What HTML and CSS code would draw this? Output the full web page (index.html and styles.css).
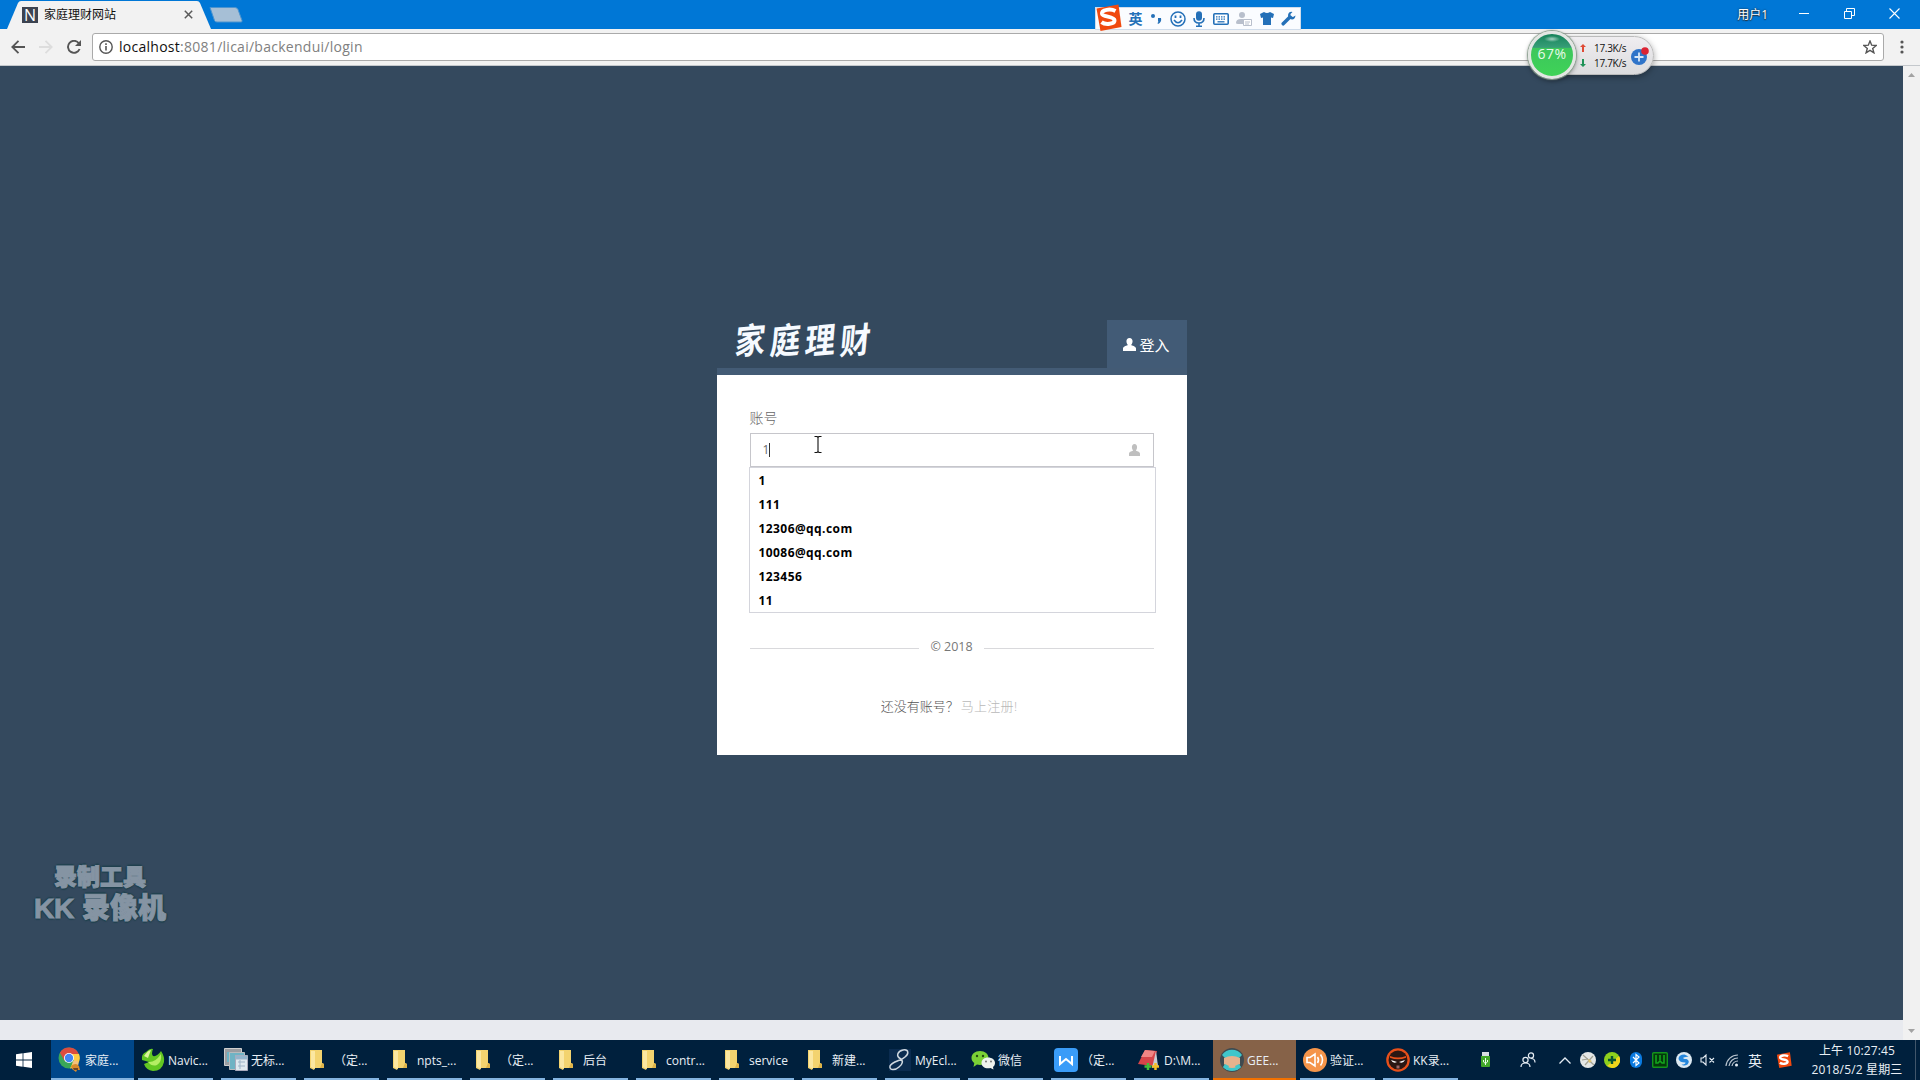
FILE: index.html
```html
<!DOCTYPE html>
<html lang="zh-CN">
<head>
<meta charset="utf-8">
<title>家庭理财网站</title>
<link rel="stylesheet" href="styles.css">
</head>
<body>
<svg width="0" height="0" class="defs">
  <symbol id="folder" viewBox="0 0 14 20"><path d="M0 0h12v13l2 1v4H5l-1 2-4-2z" fill="#f3d36f"/><path d="M1 1h4v18l-4-2z" fill="#fbe7a1"/><path d="M12 13l2 1v4h-4z" fill="#dfb449"/></symbol>
  <symbol id="user" viewBox="0 0 14 14"><path d="M7 0c2.200 0 3.300 1.600 3.300 3.600 0 1.700-.6 3-1.600 3.900 1 .9 4.800 1.100 5.300 3.500V14H0v-3c.5-2.400 4.300-2.600 5.300-3.500-1-.9-1.600-2.200-1.600-3.900C3.700 1.600 4.800 0 7 0z"/></symbol>
  <symbol id="sogou" viewBox="0 0 26 27"><path d="M1 4.500L23 .5 26 23 5 27z" fill="#f0490f"/><path d="M20 7C15 4.500 6 5.500 6.500 9.800c.5 3.500 12 2.200 12.500 6.400.4 4-9 5-13 2" fill="none" stroke="#fff" stroke-width="4"/></symbol>
</svg>

<header class="titlebar">
  <div class="tab">
    <svg class="tab-shape" width="204" height="29" viewBox="0 0 204 29"><path d="M0 29L11 3q1-2 3-2H190q2 0 3 2l11 26z" fill="#f2f2f2"/></svg>
    <span class="favicon">N</span>
    <span class="tab-title">家庭理财网站</span>
    <svg class="tab-close" width="9" height="9" viewBox="0 0 9 9"><path d="M.8.8l7.400 7.400M8.200.8L.8 8.200" stroke="#5a5a5a" stroke-width="1.500"/></svg>
  </div>
  <svg class="new-tab" width="34" height="16" viewBox="0 0 34 16"><path d="M1 .5h25q2 0 3 2l4 11q.5 1.500-1 1.500H8q-2 0-2.500-1.500z" fill="#a6bfd6" stroke="#4d94cf"/></svg>
  <div class="window-controls">
    <span class="profile">用户1</span>
    <svg width="10" height="11" viewBox="0 0 10 11"><path d="M0 5.500h10" stroke="#fff"/></svg>
    <svg width="11" height="11" viewBox="0 0 11 11" fill="none" stroke="#fff"><path d="M.5 3.500h7v7h-7zM2.500 3V.5h8v7H8"/></svg>
    <svg width="11" height="11" viewBox="0 0 11 11"><path d="M.5.5l10 10M10.500.5l-10 10" stroke="#fff" stroke-width="1.100"/></svg>
  </div>
</header>

<nav class="toolbar">
  <svg width="14" height="14" viewBox="0 0 14 14" fill="none" stroke="#555" stroke-width="1.800"><path d="M7.500.8L1.300 7l6.200 6.200M1.500 7H14"/></svg>
  <svg width="14" height="14" viewBox="0 0 14 14" fill="none" stroke="#ddd" stroke-width="1.800"><path d="M6.500.8L12.700 7l-6.200 6.200M12.500 7H0"/></svg>
  <svg width="14" height="14" viewBox="0 0 14 14"><path d="M11.800 3.200A6 6 0 1 0 12.600 9" fill="none" stroke="#555" stroke-width="1.900"/><path d="M14 0v6H8z" fill="#555"/></svg>
  <div class="omnibox">
    <svg width="14" height="14" viewBox="0 0 14 14"><circle cx="7" cy="7" r="6.200" fill="none" stroke="#555" stroke-width="1.400"/><path d="M7 6v4.500M7 3.200v1.700" stroke="#555" stroke-width="1.600"/></svg>
    <span class="url"><b>localhost</b>:8081/licai/backendui/login</span>
    <svg class="star" width="14" height="14" viewBox="0 0 14 14"><path d="M7 1l1.700 4.200 4.500.3-3.500 2.900 1.200 4.400L7 10.400l-3.900 2.400 1.200-4.400L.8 5.500l4.500-.3z" fill="none" stroke="#555" stroke-width="1.400"/></svg>
  </div>
  <svg class="menu" width="4" height="14" viewBox="0 0 4 14" fill="#555"><circle cx="2" cy="2" r="1.600"/><circle cx="2" cy="7" r="1.600"/><circle cx="2" cy="12" r="1.600"/></svg>
</nav>

<main class="viewport">
  <div class="page">
    <section class="login">
      <div class="login-head">
        <h1 class="logo"><span>家</span><span>庭</span><span>理</span><span>财</span></h1>
        <a class="login-tab"><svg width="13" height="13" fill="#fff"><use href="#user"/></svg>登入</a>
      </div>
      <div class="panel">
        <label class="label">账号</label>
        <div class="field">
          <span class="value">1</span><i class="caret"></i>
          <svg class="field-icon" width="11" height="12" fill="#bfbfbf" viewBox="0 0 14 14" preserveAspectRatio="none"><use href="#user"/></svg>
          <ul class="suggest">
            <li>1</li><li>111</li><li>12306@qq.com</li><li>10086@qq.com</li><li>123456</li><li>11</li>
          </ul>
        </div>
        <div class="divider"><span>© 2018</span></div>
        <p class="signup">还没有账号？<a>马上注册!</a></p>
      </div>
    </section>
  </div>
  <div class="scrollbar">
    <svg width="7" height="4" viewBox="0 0 7 4"><path d="M0 4L3.500 0 7 4z" fill="#a3a3a3"/></svg>
    <svg width="7" height="4" viewBox="0 0 7 4"><path d="M0 0l3.500 4L7 0z" fill="#a3a3a3"/></svg>
  </div>
</main>

<footer class="taskbar">
  <div class="start"><svg width="16" height="16" viewBox="0 0 16 16" fill="#fff"><path d="M0 2.200L6.600 1.300v6.300H0zM7.400 1.200L16 0v7.600H7.400zM0 8.400h6.600v6.300L0 13.800zM7.400 8.400H16V16l-8.600-1.200z"/></svg></div>
  <div class="tasks">
    <div class="task active"><svg width="24" height="26" viewBox="0 0 24 26"><circle cx="11" cy="11" r="10.500" fill="#3aa757"/><path d="M1.900 5.700A10.500 10.500 0 0 1 20.700 7l-12 1-2 6z" fill="#db4c3f"/><path d="M11 7h10a10.500 10.500 0 0 1-9 14.500L16 13z" fill="#fc4"/><circle cx="11" cy="11" r="5" fill="#fff"/><circle cx="11" cy="11" r="4.200" fill="#4285f4"/><circle cx="17.500" cy="16.500" r="3" fill="#f3c17d"/><path d="M13 19q5-4 8 0l1 4h-3l-1 2-4-3z" fill="#d98a2b"/><path d="M15 21h5v2h-4z" fill="#6d4526"/></svg><span>家庭...</span></div>
    <div class="task"><svg width="24" height="24" viewBox="0 0 24 24"><path d="M1 12Q0 6 5 4q4-4 7-3-2 5 0 7 4 1 8-5 4 6 3 11-2 9-11 9-7-1-9-7l5-2z" fill="#62c722"/><path d="M3 8q4-6 7-6-2 5-3 8z" fill="#dcf59c"/><path d="M7 14q7 1 13-8 1 8-4 11-5 2-9-3z" fill="#b4ee64"/></svg><span>Navic...</span></div>
    <div class="task"><svg width="24" height="24" viewBox="0 0 24 24"><path d="M.5.5h17v17H.5z" fill="#9a9da1" stroke="#cfcfcf"/><path d="M3 4h12v10H3z" fill="#6ab4c6"/><path d="M5.500 4.500h15v17h-15z" fill="#6fb3c4" stroke="#b8babc"/><path d="M11.500 7.500h12v15h-12z" fill="#dfe9ef" stroke="#aab"/><path d="M12 8h11v3H12zM14 14h7M14 18h7M16 12v9" fill="#8fb5cf" stroke="#9db3c7"/></svg><span>无标...</span></div>
    <div class="task folder"><svg><use href="#folder"/></svg><span>（定...</span></div>
    <div class="task folder"><svg><use href="#folder"/></svg><span>npts_...</span></div>
    <div class="task folder"><svg><use href="#folder"/></svg><span>（定...</span></div>
    <div class="task folder"><svg><use href="#folder"/></svg><span>后台</span></div>
    <div class="task folder"><svg><use href="#folder"/></svg><span>contr...</span></div>
    <div class="task folder"><svg><use href="#folder"/></svg><span>service</span></div>
    <div class="task folder"><svg><use href="#folder"/></svg><span>新建...</span></div>
    <div class="task"><svg width="24" height="24" viewBox="0 0 24 24"><path d="M1 1h22v22H1z" fill="#0b2c50"/><path d="M13 11C7 8 10 3 15 2c6-1 6 4 2 7-4 4-13 4-15 9-1 5 6 4 9 1 4-3 4-6 2-8z" fill="none" stroke="#cfd8e0" stroke-width="1.500"/></svg><span>MyEcl...</span></div>
    <div class="task"><svg width="24" height="20" viewBox="0 0 24 20"><path d="M9 1c5 0 8.500 3 8.500 7S14 15 9 15l-3-.5L2.500 17l.8-4C1.500 11.800.5 10 .5 8 .5 4 4 1 9 1z" fill="#7bd136"/><circle cx="6" cy="6" r="1.200" fill="#254d10"/><circle cx="12" cy="6" r="1.200" fill="#254d10"/><path d="M17 7.500c4 0 7 2.200 7 5.500 0 2-1 3-2 4l.5 2.500-3-1.500c-5 1-9-1-9-5 0-3.300 3-5.500 6.500-5.500z" fill="#eef2ee"/><circle cx="15" cy="11.500" r="1" fill="#777"/><circle cx="20" cy="11.500" r="1" fill="#777"/></svg><span>微信</span></div>
    <div class="task"><svg width="24" height="24" viewBox="0 0 24 24"><rect width="24" height="24" rx="4" fill="#3a9cf8"/><path d="M6 8v8l6-5 6 5V8" fill="none" stroke="#fff" stroke-width="2"/></svg><span>（定...</span></div>
    <div class="task"><svg width="24" height="24" viewBox="0 0 24 24"><path d="M8 2l12 1-4 15-15-2z" fill="#d6454a"/><path d="M8 2l10 1-3 6H4z" fill="#ef8685"/><path d="M19 3l2 15-6 2z" fill="#c8ccd4"/><path d="M11 15v7M7.500 18.500h7" stroke="#42bd3c" stroke-width="2.500"/><path d="M18.500 15v7M15 18.500h7" stroke="#f4bf26" stroke-width="2.500"/></svg><span>D:\M...</span></div>
    <div class="task alert"><svg width="24" height="24" viewBox="0 0 24 24"><circle cx="12" cy="12" r="12" fill="#3f4a50"/><path d="M2 7a12 12 0 0 1 20 0l-3 3H5zM3 19h18a12 12 0 0 1-18 0z" fill="#3fc6ca"/><path d="M4 10q8-4 16 0v6q-3 4-8 4t-8-4z" fill="#e5b28d"/><path d="M5 16l4 2-2 4-4-3zM19 16l-4 2 2 4 4-3z" fill="#3fc6ca"/></svg><span>GEE...</span></div>
    <div class="task"><svg width="24" height="24" viewBox="0 0 24 24"><circle cx="12" cy="12" r="12" fill="#f5954a"/><path d="M4 9.500h3L12 6v12l-5-3.500H4zM14.500 9q2 3 0 6M17.500 6.500q4 5.500 0 11" fill="none" stroke="#fff" stroke-width="1.600"/></svg><span>验证...</span></div>
    <div class="task"><svg width="24" height="24" viewBox="0 0 24 24"><circle cx="12" cy="12" r="11.800" fill="#e8501a"/><circle cx="12" cy="12" r="9.500" fill="#2b1713"/><path d="M4 8q8 3 16 0v1.800q-8 3-16 0z" fill="#e8501a"/><path d="M5 12l6 2q-4 2-6-2zM19 12l-6 2q4 2 6-2z" fill="#fff"/><path d="M10.500 17.500h3v3h-3z" fill="#966"/></svg><span>KK录...</span></div>
  </div>
  <div class="tray">
    <svg width="11" height="16" viewBox="0 0 11 16"><path d="M2 0h7v4H2z" fill="#d7dde2"/><path d="M1 4h9v10q0 1-1 1H2q-1 0-1-1z" fill="#41a829"/><path d="M5.500 6v7M3.500 8v2l2 1.500 2-1.500V8" fill="none" stroke="#eaffea"/></svg>
    <svg class="people" width="16" height="16" viewBox="0 0 16 16" fill="none" stroke="#e5edf4" stroke-width="1.200"><circle cx="5.500" cy="8" r="2.600"/><path d="M1 15q0-4 4.500-4t4.500 4"/><circle cx="11" cy="3.500" r="2.600"/><path d="M11 6.500q4 0 4 4"/></svg>
    <svg class="chevron" width="12" height="7" viewBox="0 0 12 7"><path d="M.5 6.500L6 1l5.500 5.500" fill="none" stroke="#e5edf4" stroke-width="1.300"/></svg>
    <svg width="16" height="16" viewBox="0 0 16 16"><circle cx="8" cy="8" r="8" fill="#e4e7e6"/><path d="M3 3l11 10M5 13l8-9M2 8l6-1" stroke="#a3a294" stroke-width="1.200"/><path d="M8 7l4 2-3 2z" fill="#e0c36d"/></svg>
    <svg width="16" height="16" viewBox="0 0 16 16"><circle cx="8" cy="8" r="8" fill="#8fd01d"/><path d="M8 16A8 8 0 0 0 15 4L3 14z" fill="#f0d51c"/><path d="M8 4v8M4 8h8" stroke="#0b5530" stroke-width="2.400"/></svg>
    <svg width="16" height="16" viewBox="0 0 16 16"><rect x="2" width="12" height="16" rx="6" fill="#0a7ae0"/><path d="M5 5l6 6-3 2.500v-11L11 5l-6 6" fill="none" stroke="#fff" stroke-width="1.200"/></svg>
    <svg width="16" height="16" viewBox="0 0 16 16"><rect x=".7" y=".7" width="14.600" height="14.600" rx="1" fill="#04380b" stroke="#13941c" stroke-width="1.400"/><path d="M4 3v8h2l2-2 2 2h2V3M8 3v5" fill="none" stroke="#13a51d" stroke-width="1.600"/></svg>
    <svg width="16" height="16" viewBox="0 0 16 16"><circle cx="8" cy="8" r="8" fill="#dce9f2"/><path d="M2.500 7q0-4.500 6-4.500l4 2-5 1q-1 1.500 3 1.500 4 2 1 5.500-4 2-6 0 4 0 4-2-6 0-7-3.500z" fill="#2486db"/></svg>
    <svg width="16" height="12" viewBox="0 0 16 12" fill="none" stroke="#e5edf4" stroke-width="1.100"><path d="M1 4h2l3-3v10L3 8H1zM9.500 4l4.500 4.500M14 4L9.500 8.500"/></svg>
    <svg class="wifi" width="14" height="14" viewBox="0 0 14 14" fill="none" stroke="#b9c5d0" stroke-width="1.200"><path d="M1 13A12 12 0 0 1 13 2M4 13a9 9 0 0 1 9-8M7 13a6 6 0 0 1 6-5"/><circle cx="11.500" cy="12" r="1.500" fill="#e5edf4" stroke="none"/></svg>
    <span class="lang">英</span>
    <svg class="tray-sogou" width="16" height="16"><use href="#sogou"/></svg>
  </div>
  <div class="clock"><span>上午 10:27:45</span><span>2018/5/2 星期三</span></div>
  <div class="desktop-edge"></div>
</footer>

<div class="ime">
  <svg class="ime-logo" width="27" height="27"><use href="#sogou"/></svg>
  <b>英</b>
  <svg width="12" height="14" viewBox="0 0 12 14" fill="#2470b8"><circle cx="3" cy="4" r="2"/><path d="M8 6h3q1 4-3 6l-.5-1Q9 10 8 9z"/></svg>
  <svg width="16" height="16" viewBox="0 0 16 16" fill="none" stroke="#2470b8" stroke-width="1.500"><circle cx="8" cy="8" r="7"/><path d="M4 9q4 5.500 8 0"/><path d="M5.500 4.500v2.500M10.500 4.500v2.500" stroke-width="1.800"/></svg>
  <svg width="12" height="16" viewBox="0 0 12 16" fill="none" stroke="#2470b8" stroke-width="1.600"><rect x="3.800" y="1" width="4.400" height="8" rx="2.200" fill="#2470b8"/><path d="M1 7q0 5 5 5t5-5M6 12v3M3 15.200h6"/></svg>
  <svg width="16" height="12" viewBox="0 0 16 12"><rect x=".8" y=".8" width="14.400" height="10.400" rx="1" fill="#fff" stroke="#2470b8" stroke-width="1.600"/><path d="M3 3.800h10M3 6.200h10" stroke="#2470b8" stroke-width="1.300" stroke-dasharray="1.500 1"/><path d="M4.500 8.800h7" stroke="#2470b8" stroke-width="1.300"/></svg>
  <svg width="16" height="16" viewBox="0 0 16 16"><circle cx="6" cy="4" r="3" fill="#b8bfcc"/><path d="M0 12q0-4 5-4h3v5H2q-2 0-2-1z" fill="#b8bfcc"/><path d="M7.500 8.500h8v6h-8zM9 11h5M9 13h4" fill="#fff" stroke="#b8bfcc"/></svg>
  <svg width="14" height="13" viewBox="0 0 14 13"><path d="M0 2L4 0q3 2 6 0l4 2-1 4-2-.5V13H3V5.500L1 6z" fill="#2470b8"/></svg>
  <svg width="15" height="15" viewBox="0 0 15 15"><path d="M2.200 12.800L9 6" stroke="#2470b8" stroke-width="3.500" stroke-linecap="round"/><path d="M11.500 1Q8 0 7 4q0 4 4 4.500 3 0 3.500-4L12 6 9.500 5V3z" fill="#2470b8"/></svg>
</div>

<div class="speed">
  <div class="speed-bar">
    <div class="rates">
      <span><svg width="6" height="8" viewBox="0 0 6 8"><path d="M3 0l3 3H4v5H2V3H0z" fill="#df4a35"/></svg>17.3K/s</span>
      <span><svg width="6" height="8" viewBox="0 0 6 8"><path d="M3 8L0 5h2V0h2v5h2z" fill="#1f9358"/></svg>17.7K/s</span>
    </div>
    <svg width="18" height="18" viewBox="0 0 18 18"><circle cx="8" cy="10" r="8" fill="#2f74c9"/><path d="M8 5.500v9M3.500 10h9" stroke="#d8e7f7" stroke-width="1.800"/><circle cx="14" cy="4" r="3.800" fill="#dc2333"/></svg>
  </div>
  <div class="ball">67%</div>
</div>

<div class="watermark"><span>录制工具</span><strong>KK 录像机</strong></div>

<svg class="cursor" width="8" height="17" viewBox="0 0 8 17"><path d="M.5.5h2.500l1 1 1-1h2.500M4 1v15M.5 16.500H3l1-1 1 1h2.500" fill="none" stroke="#111" stroke-width="1.100"/></svg>
</body>
</html>
```
FILE: styles.css
```css
* { box-sizing: border-box; }
html, body { height: 100%; }
body {
  margin: 0;
  overflow: hidden;
  display: flex;
  flex-direction: column;
  font: 12px "Open Sans", "Noto Sans CJK SC", sans-serif;
}
svg { flex: none; display: block; }
.defs { position: absolute; }

.titlebar { height: 29px; flex: none; display: flex; background: #0077d6; padding-left: 7px; }
.tab { position: relative; width: 204px; display: flex; align-items: center; padding-left: 15px; }
.tab-shape { position: absolute; left: 0; top: 0; }
.favicon, .tab-title, .tab-close { position: relative; }
.favicon {
  width: 16px; height: 16px; background: #3c4350; color: #fff;
  font: 16px/16px "Open Sans", sans-serif; text-align: center; margin-right: 6px;
}
.tab-title { width: 140px; color: #111; line-height: 16px; }
.new-tab { margin: 7px 0 0 -2px; }
.window-controls { margin-left: auto; display: flex; align-items: center; padding: 0 20px 3px 0; height: 29px; }
.window-controls svg { margin-left: 34.500px; }
.window-controls .profile + svg { margin-left: 31px; }
.profile { color: #fff; text-shadow: 0 0 2px #222, 0 1px 1px #333; line-height: 16px; padding-top: 3px; }

.toolbar {
  height: 37px; flex: none; display: flex; align-items: center; gap: 14px;
  padding: 0 16px 0 11px; background: #f2f2f2; border-bottom: 1px solid #c4c8cc;
}
.omnibox {
  flex: 1; height: 28px; display: flex; align-items: center; gap: 6px; margin: 0 2px 0 -3px;
  padding: 0 6px; background: #fff; border: 1px solid #aaa; border-radius: 3px;
}
.url { flex: 1; color: #808080; font-size: 14px; letter-spacing: .27px; line-height: 20px; }
.url b { font-weight: 400; color: #111; }

.viewport { flex: 1; display: flex; min-height: 0; background: #e8eaef; }
.page { flex: 1; height: 954px; background: #34495e; display: flex; justify-content: center; }
.scrollbar {
  width: 17px; background: #f1f1f1; display: flex; flex-direction: column;
  justify-content: space-between; align-items: center; padding: 7px 0;
}

.login { width: 470px; margin-top: 254px; height: 435px; }
.login-head {
  height: 55px; display: flex; justify-content: space-between; border-bottom: 7px solid #435b75; padding-left: 18px;
}
.logo { margin: 0; display: flex; gap: 5px; color: #f6faff; font: 700 30px/38px "Noto Sans CJK SC", sans-serif; }
.logo span { transform: skewX(-10deg) rotate(-5deg) scaleY(1.180); }
.login-tab {
  width: 80px; display: flex; align-items: center; justify-content: center; gap: 3px;
  background: #425b76; color: #fff; font-size: 15px; height: 48px;
}
.panel { height: 380px; background: #fff; padding: 33px 33px 0; color: #777; }
.label { display: block; font-size: 14px; line-height: 20px; font-weight: 300; color: #666; }
.field {
  position: relative; height: 34px; margin-top: 5px; display: flex; align-items: center;
  padding: 0 13px 0 12px; border: 1px solid #c6c6cb; color: #666;
}
.value { line-height: 16px; }
.caret { width: 1px; height: 14px; background: #333; }
.field-icon { margin-left: auto; }
.suggest {
  position: absolute; left: -2px; top: 33px; width: 407px; height: 146px; margin: 0; padding: 1px 9px 0;
  background: #fff; border: 1px solid #d4d5dc; list-style: none; color: #000;
  font: 700 12px/24px "Open Sans", sans-serif; letter-spacing: .42px;
}
.divider { display: flex; align-items: center; gap: 11px; margin-top: 170px; line-height: 20px; font-size: 12.500px; }
.divider::before, .divider::after { content: ""; flex: 1; height: 1px; background: #d9d9dc; position: relative; top: 1px; }
.signup { margin: 39px 0 0; padding-right: 5px; text-align: center; font-size: 13px; line-height: 20px; font-weight: 300; color: #555; }
.signup a { color: #b8b8b8; margin-left: 2px; letter-spacing: .3px; }

.taskbar { height: 40px; flex: none; display: flex; background: #00203d; color: #e9eff5; }
.start { width: 51px; display: flex; align-items: center; padding-left: 16px; }
.tasks { display: grid; grid-template-columns: repeat(17, 83px); }
.task { display: flex; align-items: center; gap: 3px; padding-left: 7px; position: relative; white-space: nowrap; }
.task::after { content: ""; position: absolute; left: 4px; right: 4px; bottom: 0; height: 2px; background: #84b4e0; }
.active { background: #00478a; }
.active::after, .alert::after { left: 0; right: 0; }
.alert { background: #866248; }
.alert::after { background: #f27100; }
.folder { padding-left: 10px; gap: 10px; }
.folder svg { width: 14px; height: 20px; }
.tray { flex: 1; display: flex; align-items: center; gap: 8px; padding-left: 18px; }
.people { margin: 0 15px 0 21px; }
.chevron { margin-right: 1px; }
.wifi { margin: 0 1px; }
.lang { font-size: 14px; margin-right: 6px; }
.clock { width: 98px; margin-right: 9px; display: flex; flex-direction: column; justify-content: center; align-items: center; line-height: 19px; letter-spacing: .15px; white-space: nowrap; }
.desktop-edge { width: 5px; border-left: 1px solid #41566b; }

.ime {
  position: absolute; left: 1095px; top: 7px; width: 206px; height: 23px; padding: 0 4px 0 0;
  display: flex; align-items: center; justify-content: space-between; background: #fafcff; border: 1px solid #cfdceb;
}
.ime b { color: #2470b8; font-size: 14px; line-height: 20px; }
.ime-logo { margin: -3px -1px 0 -1px; }

.speed { position: absolute; left: 1528px; top: 30px; width: 127px; height: 50px; }
.speed-bar {
  position: absolute; left: 24px; top: 6px; width: 102px; height: 39px; padding: 0 4px 0 27px;
  display: flex; align-items: center; justify-content: space-between; border-radius: 0 20px 20px 0;
  background: linear-gradient(#efedf0, #dcdcde); border: 1px solid #bbb; box-shadow: 0 2px 6px rgba(0, 0, 0, .35);
}
.rates { display: flex; flex-direction: column; font: 10px/15px "Open Sans", sans-serif; color: #111; }
.rates span { display: flex; align-items: center; gap: 8px; letter-spacing: -.3px; }
.ball {
  position: absolute; left: 0; top: 1px; width: 48px; height: 48px; border-radius: 50%;
  border: 3px solid #e3e6e3; box-shadow: 0 0 1px 1px #8aa08f, 0 2px 5px rgba(0, 0, 0, .4);
  background:
    radial-gradient(ellipse 8px 3px at 50% 5px, rgba(255, 255, 255, .6), transparent),
    linear-gradient(#16835a 0, #379d77 32%, #3cc65c 33%, #3fd357 100%);
  color: #e8fbe9; font-size: 14px; line-height: 40px; letter-spacing: .5px; text-align: center;
}

.watermark {
  position: absolute; left: 34px; top: 863px; width: 132px; display: flex; flex-direction: column; align-items: center;
  color: #8594a3; font: 900 23px/29px "Liberation Sans", "Noto Sans CJK SC", sans-serif; white-space: nowrap;
  -webkit-text-stroke: 1px #8594a3;
  text-shadow: 2px 0 1px #21424f, -2px 0 1px #21424f, 0 2px 1px #21424f, 0 -2px 1px #21424f;
}
.watermark strong { font-size: 28px; line-height: 33px; font-weight: 900; }
.cursor { position: absolute; left: 814px; top: 436px; }
```
